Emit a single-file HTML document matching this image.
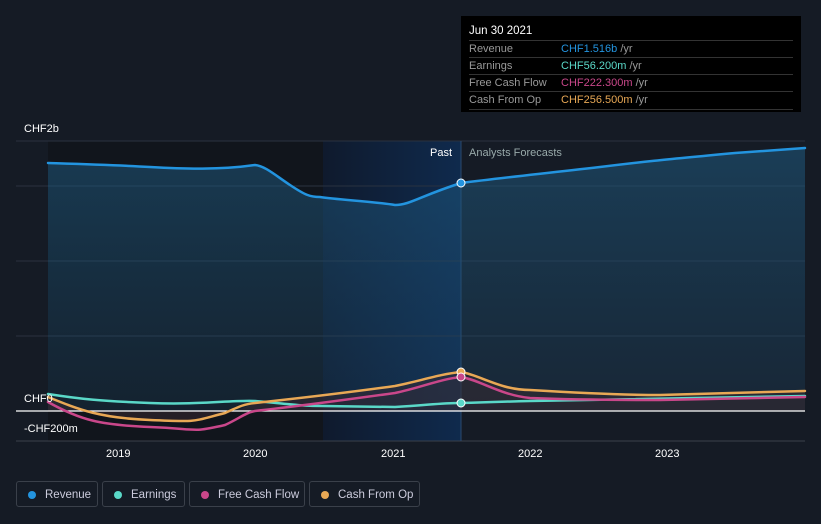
<!DOCTYPE html><html><head><style>
body{margin:0;width:821px;height:524px;background:#151b25;font-family:"Liberation Sans",sans-serif;overflow:hidden;position:relative}
.t{position:absolute;color:#fff;font-size:11px}
.tip{position:absolute;left:461px;top:16px;width:340px;height:96px;background:#000;}
.tip .r{position:absolute;left:8px;width:324px;border-top:1px solid #333;font-size:11px;height:17px;line-height:17px;color:#999}
.tip .r span{position:absolute;left:92px}
.lg{position:absolute;top:481px;height:26px;border:1px solid #3a404a;border-radius:3px;color:#ccd;font-size:11.5px;line-height:26px;box-sizing:border-box;padding-left:28px}
.lg i{position:absolute;left:11px;top:9px;width:8px;height:8px;border-radius:50%}
</style></head><body>
<svg width="821" height="524" style="position:absolute;left:0;top:0">
<defs><linearGradient id="pb" x1="0" x2="1"><stop offset="0" stop-color="#0f1a2d"/><stop offset="1" stop-color="#0f2a4d"/></linearGradient>
<linearGradient id="rv" x1="0" y1="0" x2="0" y2="1"><stop offset="0" stop-color="#1e5a80" stop-opacity=".55"/><stop offset="1" stop-color="#1e4a6a" stop-opacity=".25"/></linearGradient></defs>
<rect x="48" y="141" width="275" height="300" fill="#11151c"/>
<rect x="323" y="141" width="138" height="300" fill="url(#pb)"/>
<g stroke="#2a3240" stroke-width="1"><line x1="16" y1="141" x2="805" y2="141"/><line x1="16" y1="186" x2="805" y2="186"/><line x1="16" y1="261" x2="805" y2="261"/><line x1="16" y1="336" x2="805" y2="336"/><line x1="16" y1="441" x2="805" y2="441" stroke="#3a404a"/></g>
<line x1="461" y1="141" x2="461" y2="441" stroke="#2a4a70"/>
<path d="M48,163 C80,164 115,165 150,167 S220,170 255,165 C265,166 275,175 290,185 S310,197 320,197 C340,200 370,201 395,205 C410,205 420,196 461,183 C500,178 530,175 600,167 C640,162 660,160 735,153 L805,148 L805,411 L48,411Z" fill="url(#rv)"/>
<path d="M48,397 C80,410 100,418 150,420 S210,422 255,403 C300,398 330,395 395,386 C420,381 440,374 461,372 C500,380 510,390 530,390 C580,393 620,395 660,395 L805,391 L805,411 L48,411Z" fill="#3a2a30" opacity=".5"/>
<line x1="16" y1="411" x2="805" y2="411" stroke="#fff" stroke-width="1.2"/>
<g fill="none" stroke-width="2.5" stroke-linecap="round">
<path d="M48,163 C80,164 115,165 150,167 S220,170 255,165 C265,166 275,175 290,185 S310,197 320,197 C340,200 370,201 395,205 C410,205 420,196 461,183 C500,178 530,175 600,167 C640,162 660,160 735,153 L805,148" stroke="#2394df"/>
<path d="M48,394 C80,399 100,401 150,403 S230,400 255,401 C290,404 300,406 323,406 L395,407 C430,405 440,403 461,403 C500,402 520,401 530,401 L805,396" stroke="#5ad8c8"/>
<path d="M48,402 C80,420 100,425 150,427 S190,433 225,425 C240,418 245,413 255,411 C300,406 330,402 395,393 C420,388 440,379 461,377 C480,380 500,395 530,398 C580,400 620,400 660,400 L805,397" stroke="#c9478a"/>
<path d="M48,397 C80,410 100,418 150,420 S190,422 225,413 C240,406 245,404 255,403 C300,398 330,395 395,386 C420,381 440,374 461,372 C480,375 500,390 530,390 C580,393 620,395 660,395 L805,391" stroke="#e8a855"/>
</g>
<circle cx="461" cy="183" r="4" fill="#2394df" stroke="#fff"/>
<circle cx="461" cy="372" r="4" fill="#e8a855" stroke="#fff"/>
<circle cx="461" cy="377" r="4" fill="#c9478a" stroke="#fff"/>
<circle cx="461" cy="403" r="4" fill="#5ad8c8" stroke="#fff"/>
</svg>
<div class="t" style="left:24px;top:123px">CHF2b</div>
<div class="t" style="left:24px;top:393px">CHF0</div>
<div class="t" style="left:24px;top:423px">-CHF200m</div>
<div class="t" style="left:430px;top:147px">Past</div>
<div class="t" style="left:469px;top:147px;color:#9aa">Analysts Forecasts</div>
<div class="t" style="left:106px;top:448px">2019</div>
<div class="t" style="left:243px;top:448px">2020</div>
<div class="t" style="left:381px;top:448px">2021</div>
<div class="t" style="left:518px;top:448px">2022</div>
<div class="t" style="left:655px;top:448px">2023</div>
<div class="tip">
<div class="t" style="left:8px;top:9px;font-size:11.5px">Jun 30 2021</div>
<div class="r" style="top:24px">Revenue<span><b style="font-weight:normal;color:#2394df">CHF1.516b</b> /yr</span></div>
<div class="r" style="top:41px">Earnings<span><b style="font-weight:normal;color:#5ad8c8">CHF56.200m</b> /yr</span></div>
<div class="r" style="top:58px">Free Cash Flow<span><b style="font-weight:normal;color:#c9478a">CHF222.300m</b> /yr</span></div>
<div class="r" style="top:75px;border-bottom:1px solid #333">Cash From Op<span><b style="font-weight:normal;color:#e8a855">CHF256.500m</b> /yr</span></div>
</div>
<div class="lg" style="left:16px;width:82px"><i style="background:#2394df"></i>Revenue</div>
<div class="lg" style="left:102px;width:83px"><i style="background:#5ad8c8"></i>Earnings</div>
<div class="lg" style="left:189px;width:116px"><i style="background:#c9478a"></i>Free Cash Flow</div>
<div class="lg" style="left:309px;width:111px"><i style="background:#e8a855"></i>Cash From Op</div>
</body></html>
